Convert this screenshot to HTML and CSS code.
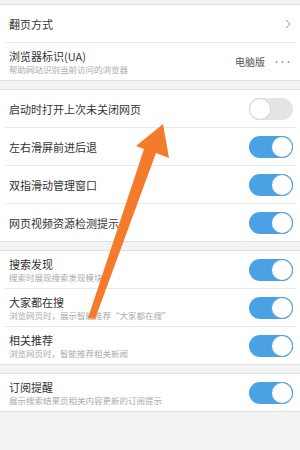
FILE: index.html
```html
<!DOCTYPE html>
<html lang="zh">
<head>
<meta charset="utf-8">
<link rel="stylesheet" href="styles.css">
</head>
<body>
<div class="page">
  <section class="group">
    <div class="row">
      <div class="label"><div class="title">翻页方式</div></div>
      <svg class="chev" width="6" height="10" viewBox="0 0 6 10"><polyline points="1,1 5,5 1,9" fill="none" stroke="#999" stroke-width="1"/></svg>
    </div>
    <div class="sep"></div>
    <div class="row">
      <div class="label"><div class="title">浏览器标识(UA)</div><div class="sub">帮助网站识别当前访问的浏览器</div></div>
      <span class="value">电脑版</span>
      <svg class="dots" width="15" height="4" viewBox="0 0 15 4"><circle cx="1.5" cy="2" r="1" fill="#999"/><circle cx="7.5" cy="2" r="1" fill="#999"/><circle cx="13.5" cy="2" r="1" fill="#999"/></svg>
    </div>
  </section>

  <section class="group">
    <div class="row">
      <div class="label"><div class="title">启动时打开上次未关闭网页</div></div>
      <span class="toggle"></span>
    </div>
    <div class="sep"></div>
    <div class="row">
      <div class="label"><div class="title">左右滑屏前进后退</div></div>
      <span class="toggle on"></span>
    </div>
    <div class="sep"></div>
    <div class="row">
      <div class="label"><div class="title">双指滑动管理窗口</div></div>
      <span class="toggle on"></span>
    </div>
    <div class="sep"></div>
    <div class="row">
      <div class="label"><div class="title">网页视频资源检测提示</div></div>
      <span class="toggle on"></span>
    </div>
  </section>

  <section class="group">
    <div class="row">
      <div class="label"><div class="title">搜索发现</div><div class="sub">搜索时展现搜索发现模块</div></div>
      <span class="toggle on"></span>
    </div>
    <div class="sep"></div>
    <div class="row">
      <div class="label"><div class="title">大家都在搜</div><div class="sub">浏览网页时，展示智能推荐“大家都在搜”</div></div>
      <span class="toggle on"></span>
    </div>
    <div class="sep"></div>
    <div class="row">
      <div class="label"><div class="title">相关推荐</div><div class="sub">浏览网页时，智能推荐相关新闻</div></div>
      <span class="toggle on"></span>
    </div>
  </section>

  <section class="group">
    <div class="row">
      <div class="label"><div class="title">订阅提醒</div><div class="sub">展示搜索结果页相关内容更新的订阅提示</div></div>
      <span class="toggle on"></span>
    </div>
  </section>

  <svg class="arrow" width="300" height="450" viewBox="0 0 300 450">
    <polygon points="163,124 169,158 156,153 95,319 88,318 144,149 136,146" fill="#f47a2c"/>
  </svg>
</div>
</body>
</html>
```

FILE: styles.css
```css
* { box-sizing: border-box; }
html, body { margin: 0; padding: 0; }
body {
  background: #f3f3f3;
  font-family: "Noto Sans CJK SC", "Noto Sans", sans-serif;
  width: 300px;
  height: 450px;
  overflow: hidden;
}
.page {
  position: relative;
  padding-top: 4px;
  display: flex;
  flex-direction: column;
  gap: 8px;
  height: 450px;
}
.group {
  background: #fff;
  border-top: 1px solid #e0e0e0;
  border-bottom: 1px solid #e0e0e0;
  display: flex;
  flex-direction: column;
}
.row {
  height: 37px;
  display: flex;
  align-items: center;
  padding: 0 7px 0 9px;
}
.sep {
  height: 1px;
  background: #e8e8e8;
  margin: 0 4px 0 5px;
}
.label {
  flex: 1;
  display: flex;
  flex-direction: column;
  gap: 1px;
}
.title {
  font-size: 11px;
  line-height: 14px;
  color: #333;
}
.sub {
  font-size: 8.5px;
  line-height: 11px;
  color: #aaa;
}
.chev { margin-right: 2px; }
.value {
  font-size: 10px;
  color: #555;
  margin-right: 10px;
}
.dots {
  margin-right: 3px;
  flex: none;
}
.toggle {
  position: relative;
  width: 44px;
  height: 22px;
  border-radius: 11px;
  background: #e4e4e4;
  flex: none;
}
.toggle::after {
  content: "";
  position: absolute;
  top: 1px;
  left: 1px;
  width: 20px;
  height: 20px;
  border-radius: 50%;
  background: #fff;
  box-shadow: 0 0 0 1px #d8d8d8;
}
.toggle.on { background: #4aa2e4; }
.toggle.on::after {
  left: 23px;
  box-shadow: 0 0 0 1px #5aa6dc;
}
.arrow {
  position: absolute;
  left: 0;
  top: 0;
  pointer-events: none;
}
```
